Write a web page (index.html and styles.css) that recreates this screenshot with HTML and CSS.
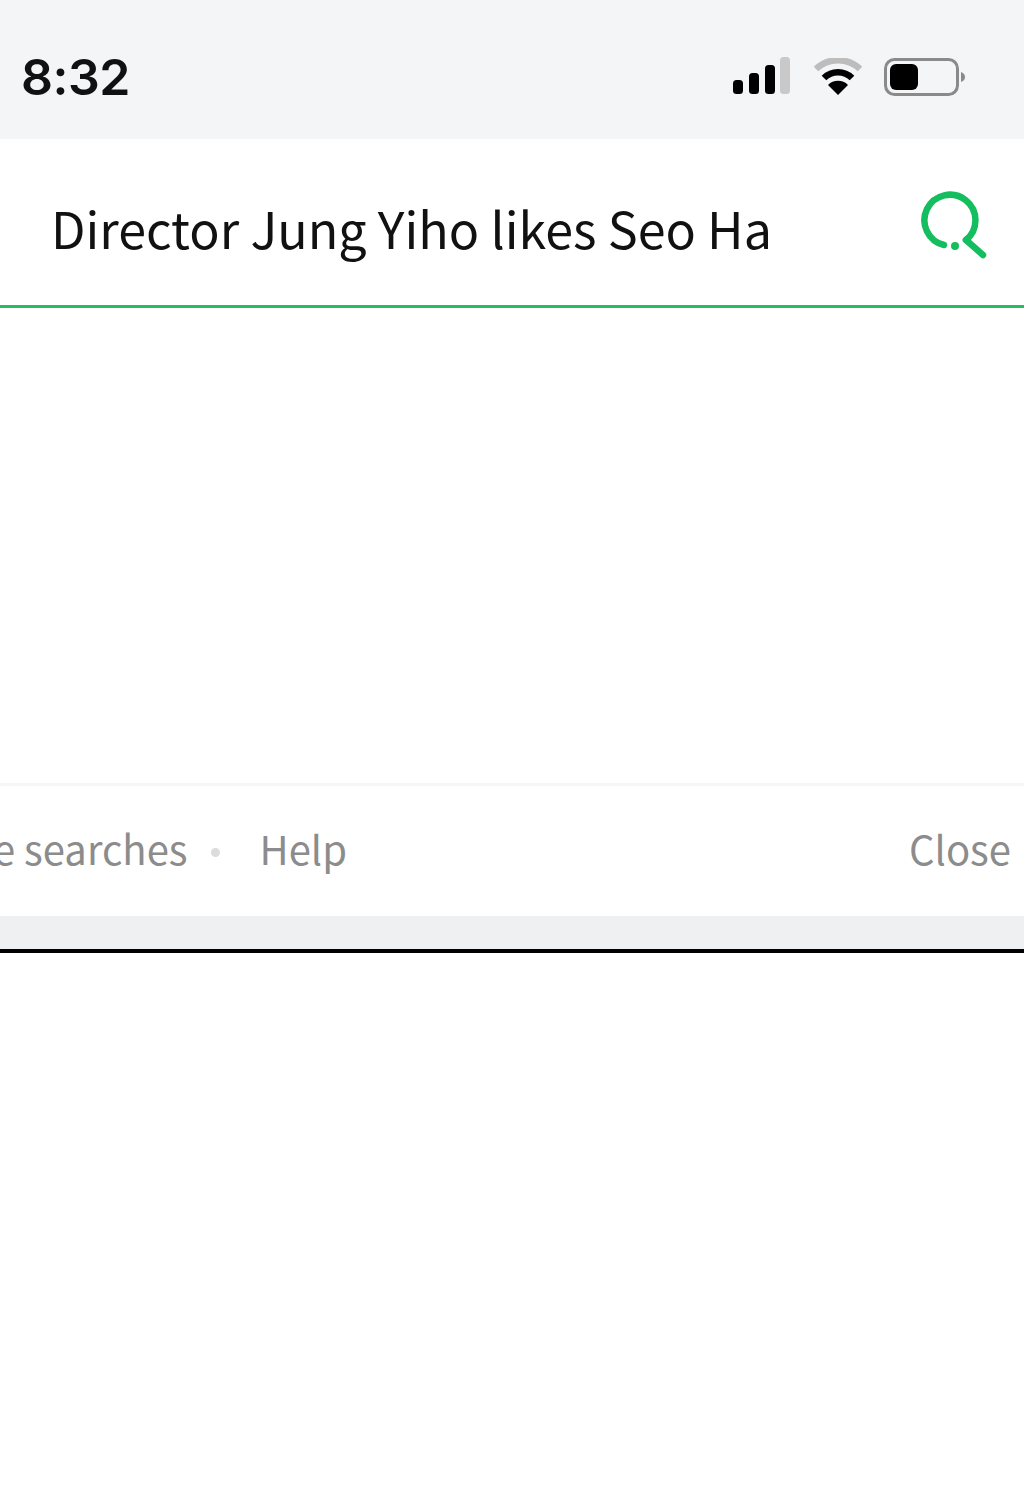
FILE: index.html
```html
<!DOCTYPE html>
<html lang="en">
<head>
  <meta charset="UTF-8" />
  <title>Search</title>
  <link rel="stylesheet" href="styles.css">
</head>
<body>
  <div class="status-bar">
    <div class="time">8:32</div>
    <div class="status-icons">
      <svg class="signal" width="60" height="40" viewBox="0 0 60 40">
        <rect x="1" y="23" width="10" height="14" rx="3.5" fill="#000"/>
        <rect x="17" y="16" width="10" height="21" rx="3.5" fill="#000"/>
        <rect x="33" y="8" width="10" height="29" rx="3.5" fill="#000"/>
        <rect x="48" y="0" width="10" height="37" rx="3.5" fill="#c9c9c9"/>
      </svg>
      <svg class="wifi" width="50" height="38" viewBox="0 0 50 38">
        <path d="M3 11 A32 32 0 0 1 47 11" fill="none" stroke="#bdbdbd" stroke-width="6.5"/>
        <path d="M11 20 A20 20 0 0 1 39 20" fill="none" stroke="#000" stroke-width="6.5"/>
        <path d="M25 37 L15 27 A14 14 0 0 1 35 27 Z" fill="#000"/>
      </svg>
      <svg class="battery" width="82" height="38" viewBox="0 0 82 38">
        <rect x="1.500" y="1.500" width="72" height="35" rx="9" fill="none" stroke="#8a8a8a" stroke-width="3"/>
        <rect x="6" y="6" width="28" height="26" rx="6" fill="#000"/>
        <path d="M77 14 C80 15 81 17 81 19 C81 21 80 23 77 24 Z" fill="#8a8a8a"/>
      </svg>
    </div>
  </div>

  <div class="search-row">
    <div class="query">Director Jung Yiho likes Seo Ha</div>
    <svg class="search-icon" width="70" height="70" viewBox="0 0 70 70">
      <path d="M27 55 A25.500 25.500 0 1 1 49 50" fill="none" stroke="#14bd5e" stroke-width="6.500" stroke-linecap="round"/>
      <path d="M49 50 L66 65" fill="none" stroke="#14bd5e" stroke-width="6.500" stroke-linecap="round"/>
      <circle cx="38" cy="56" r="4" fill="#14bd5e"/>
    </svg>
  </div>

  <div class="suggestions"></div>

  <div class="footer-row">
    <div class="footer-links">
      <span class="footer-link first">e searches</span>
      <span class="dot"></span>
      <span class="footer-link">Help</span>
    </div>
    <span class="footer-link">Close</span>
  </div>

  <div class="band"></div>
  <div class="page"></div>
</body>
</html>
```

FILE: styles.css
```css
* {
  box-sizing: border-box;
  margin: 0;
  padding: 0;
}

html, body {
  height: 100%;
  background: #fff;
  overflow: hidden;
}

body {
  font-family: "Noto Sans CJK KR", "Noto Sans", sans-serif;
}

.status-bar {
  height: 139px;
  background: #f4f5f7;
  display: flex;
  justify-content: space-between;
  align-items: center;
  padding: 14px 58px 0 21px;
}

.time {
  font-family: "Inter", "Liberation Sans", sans-serif;
  font-size: 50px;
  font-weight: 600;
  letter-spacing: -0.5px;
  color: #111;
}

.status-icons {
  display: flex;
  align-items: center;
  gap: 21px;
}

.search-row {
  height: 169px;
  display: flex;
  justify-content: space-between;
  align-items: center;
  padding: 10px 37px 0 51px;
  border-bottom: 3px solid #22bf62;
}

.query {
  font-size: 50.2px;
  font-weight: 400;
  color: #111;
  white-space: nowrap;
}

.search-icon {
  margin-top: -4px;
}

.suggestions {
  height: 475px;
}

.footer-row {
  height: 133px;
  border-top: 3px solid #f6f6f6;
  display: flex;
  justify-content: space-between;
  align-items: center;
  padding: 0 13px 6px 0;
  overflow: hidden;
}

.footer-links {
  display: flex;
  align-items: center;
}

.footer-link {
  font-size: 40px;
  font-weight: 400;
  color: #8c8c8c;
  white-space: nowrap;
}

.footer-link.first {
  margin-left: -7px;
}

.dot {
  width: 9px;
  height: 9px;
  border-radius: 50%;
  background: #dcdcdc;
  margin: 8px 40px 0 23px;
}

.band {
  height: 37px;
  background: #eff0f2;
  border-bottom: 4px solid #000;
}

.page {
  background: #fff;
}
```
